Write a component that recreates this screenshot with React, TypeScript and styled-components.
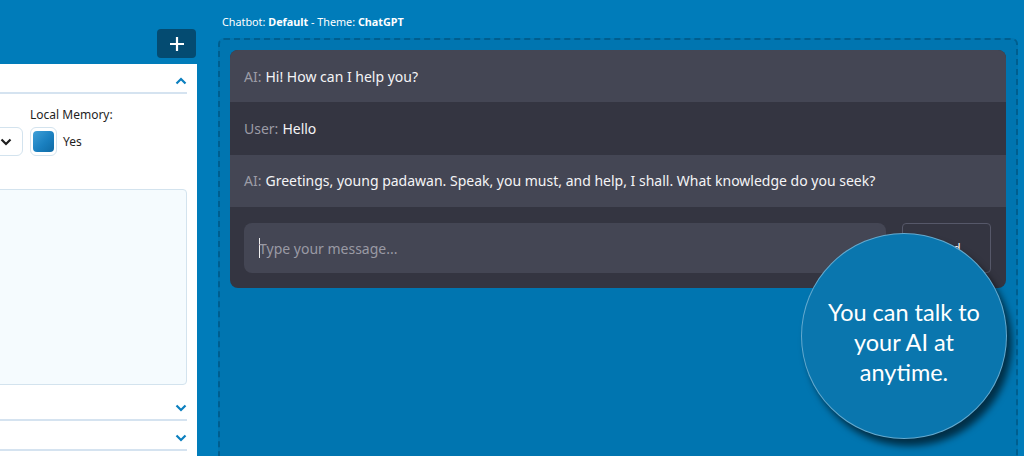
import React from "react";
import styled, { createGlobalStyle } from "styled-components";

const GlobalStyle = createGlobalStyle`
  html, body {
    margin: 0;
    padding: 0;
    background: #007cba;
    overflow: hidden;
    font-family: "Noto Sans", "Open Sans", sans-serif;
  }
  * { box-sizing: border-box; }
`;

const Page = styled.div`
  position: relative;
  display: grid;
  grid-template-columns: 197px 1fr;
  width: 1024px;
  height: 456px;
  overflow: hidden;
`;

const LeftColumn = styled.div`
  display: flex;
  flex-direction: column;
  min-height: 0;
`;

const TopBar = styled.div`
  height: 64px;
  display: flex;
  justify-content: flex-end;
  align-items: flex-start;
  padding-top: 29px;
  padding-right: 1px;
`;

const PlusButton = styled.button`
  width: 39px;
  height: 29px;
  border: none;
  border-radius: 4px;
  background: #044b71;
  display: flex;
  align-items: center;
  justify-content: center;
  padding: 0;
`;

const Panel = styled.div`
  flex: 1;
  background: #ffffff;
  padding-right: 10px;
  overflow: hidden;
  display: flex;
  flex-direction: column;
`;

const AccordionHeader = styled.div<{ $top?: number }>`
  height: 30px;
  margin-top: ${(p) => p.$top ?? 0}px;
  padding-top: 6px;
  display: flex;
  justify-content: flex-end;
  align-items: center;
  border-bottom: 2px solid #d5e3f0;
  flex-shrink: 0;
`;

const FieldRow = styled.div`
  display: flex;
  gap: 7px;
  margin-left: -60px;
  margin-top: 12px;
`;

const Field = styled.div<{ $w?: number }>`
  display: flex;
  flex-direction: column;
  gap: 4px;
  width: ${(p) => (p.$w ? `${p.$w}px` : "auto")};
`;

const FieldLabel = styled.span`
  font-size: 12px;
  line-height: 17px;
  color: #1e1e1e;
  white-space: nowrap;
`;

const SelectBox = styled.div`
  height: 29px;
  border: 1px solid #d3e3ee;
  border-radius: 6px;
  display: flex;
  align-items: center;
  justify-content: flex-end;
  padding-right: 10px;
  background: #fff;
`;

const CheckRow = styled.div`
  display: flex;
  align-items: center;
  gap: 6px;
`;

const CheckBox = styled.div`
  width: 27px;
  height: 29px;
  border: 1px solid #d3e3ee;
  border-radius: 6px;
  display: flex;
  align-items: center;
  justify-content: center;
  background: #fff;
`;

const CheckFill = styled.div`
  width: 21px;
  height: 21px;
  border-radius: 4px;
  background: linear-gradient(135deg, #3fa0d8 0%, #1a80c0 55%, #0f6aa4 100%);
`;

const CheckText = styled.span`
  font-size: 12px;
  color: #1e1e1e;
`;

const TextArea = styled.div`
  margin-top: 33px;
  margin-left: -10px;
  height: 196px;
  background: #f5fbfe;
  border: 1px solid #d3e3ee;
  border-radius: 4px;
  flex-shrink: 0;
`;

const RightColumn = styled.div`
  padding: 14px 6px 0 21px;
  display: flex;
  flex-direction: column;
`;

const InfoLabel = styled.div`
  font-size: 10.8px;
  line-height: 16px;
  color: #ffffff;
  padding-left: 4px;
  margin-bottom: 8px;
  b { font-weight: 700; }
`;

const DashedBox = styled.div`
  border: 2px dashed #005e8e;
  border-radius: 6px;
  background: #0075b0;
  padding: 10px;
  min-height: 520px;
`;

const Chat = styled.div`
  background: #343541;
  border-radius: 8px;
  overflow: hidden;
`;

const Message = styled.div<{ $ai?: boolean }>`
  height: 52.4px;
  display: flex;
  align-items: center;
  padding: 0 14px;
  background: ${(p) => (p.$ai ? "#444654" : "#343541")};
  font-size: 14px;
  color: #f4f4f6;
  white-space: nowrap;
`;

const Who = styled.span`
  color: #9c9ca6;
  margin-right: 4px;
`;

const InputArea = styled.div`
  display: flex;
  gap: 16px;
  padding: 16px 15px 15px 14px;
`;

const InputBox = styled.div`
  flex: 1;
  height: 50px;
  background: #444654;
  border-radius: 8px;
  display: flex;
  align-items: center;
  padding: 0 15px;
  font-size: 14px;
  color: #9a9aa4;
`;

const Caret = styled.span`
  width: 1px;
  height: 20px;
  background: #f0f0f0;
  margin-right: -1px;
`;

const SendButton = styled.button`
  width: 89px;
  height: 50px;
  background: transparent;
  border: 1px solid #565869;
  border-radius: 4px;
  color: #ffffff;
  font-family: inherit;
  font-size: 12px;
`;

const Bubble = styled.div`
  position: absolute;
  left: 801px;
  top: 233px;
  width: 206px;
  height: 206px;
  border-radius: 50%;
  background: #0a76ae;
  border: 1px solid rgba(160, 205, 230, 0.6);
  box-shadow: 5px 7px 7px rgba(0, 0, 0, 0.6);
  display: flex;
  align-items: center;
  justify-content: center;
  padding-top: 12px;
  text-align: center;
  color: #ffffff;
  font-family: Lato, "Open Sans", sans-serif;
  font-size: 23.5px;
  line-height: 30px;
`;

const ChevronUp = ({ color = "#0b7fbf" }: { color?: string }) => (
  <svg width="12" height="8" viewBox="0 0 12 8" fill="none">
    <path d="M1.5 6.5L6 2L10.5 6.5" stroke={color} strokeWidth="2.2" />
  </svg>
);

const ChevronDown = ({ color = "#0b7fbf" }: { color?: string }) => (
  <svg width="12" height="8" viewBox="0 0 12 8" fill="none">
    <path d="M1.5 1.5L6 6L10.5 1.5" stroke={color} strokeWidth="2.2" />
  </svg>
);

export default function App() {
  return (
    <>
      <GlobalStyle />
      <Page>
        <LeftColumn>
          <TopBar>
            <PlusButton aria-label="Add">
              <svg width="16" height="16" viewBox="0 0 16 16">
                <path d="M8 1v14M1 8h14" stroke="#fff" strokeWidth="2.2" />
              </svg>
            </PlusButton>
          </TopBar>
          <Panel>
            <AccordionHeader>
              <ChevronUp />
            </AccordionHeader>
            <FieldRow>
              <Field $w={83}>
                <FieldLabel>&nbsp;</FieldLabel>
                <SelectBox>
                  <ChevronDown color="#1e1e1e" />
                </SelectBox>
              </Field>
              <Field>
                <FieldLabel>Local Memory:</FieldLabel>
                <CheckRow>
                  <CheckBox>
                    <CheckFill />
                  </CheckBox>
                  <CheckText>Yes</CheckText>
                </CheckRow>
              </Field>
            </FieldRow>
            <TextArea />
            <AccordionHeader $top={6}>
              <ChevronDown />
            </AccordionHeader>
            <AccordionHeader>
              <ChevronDown />
            </AccordionHeader>
          </Panel>
        </LeftColumn>
        <RightColumn>
          <InfoLabel>
            Chatbot: <b>Default</b> - Theme: <b>ChatGPT</b>
          </InfoLabel>
          <DashedBox>
            <Chat>
              <Message $ai>
                <Who>AI:</Who>Hi! How can I help you?
              </Message>
              <Message>
                <Who>User:</Who>Hello
              </Message>
              <Message $ai>
                <Who>AI:</Who>Greetings, young padawan. Speak, you must, and help, I shall. What knowledge do you seek?
              </Message>
              <InputArea>
                <InputBox>
                  <Caret />
                  Type your message...
                </InputBox>
                <SendButton>Send</SendButton>
              </InputArea>
            </Chat>
          </DashedBox>
        </RightColumn>
        <Bubble>
          You can talk to
          <br />
          your AI at
          <br />
          anytime.
        </Bubble>
      </Page>
    </>
  );
}
